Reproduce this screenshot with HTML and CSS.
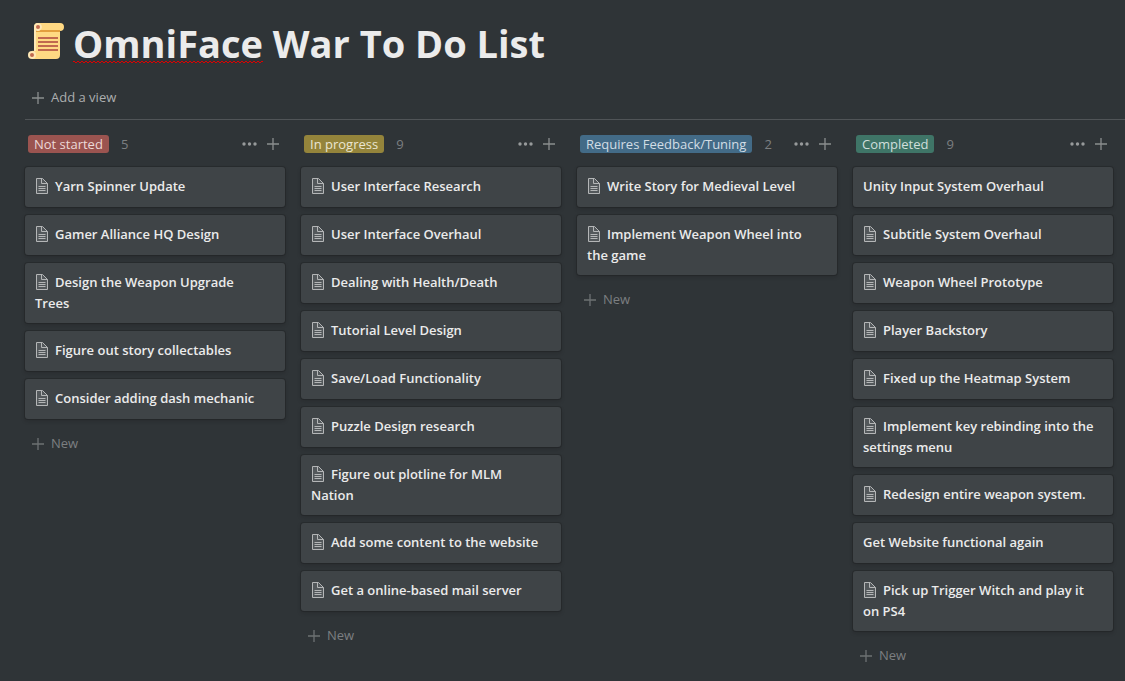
FILE: index.html
```html
<!DOCTYPE html>
<html lang="en">
<head>
<meta charset="utf-8">
<meta name="viewport" content="width=device-width, initial-scale=1">
<title>OmniFace War To Do List</title>
<link rel="stylesheet" href="styles.css">
</head>
<body>
<svg class="sprite" aria-hidden="true">
  <symbol id="page" viewBox="0 0 14 16"><path fill="currentColor" fill-opacity=".18" d="M1.5.5h6l5 5v10h-11z"/><path fill="none" stroke="currentColor" d="M1.5.5h6l5 5v10h-11zM6.5.5v5h6M3.500 8.500h7M3.500 10.500h7M3.500 12.500h7"/></symbol>
  <symbol id="plus" viewBox="0 0 12 12"><path fill="none" stroke="currentColor" stroke-width="1.300" d="M6 0v12M0 6h12"/></symbol>
  <symbol id="dots" viewBox="0 0 15 4"><g fill="currentColor"><circle cx="2" cy="2" r="1.700"/><circle cx="7.500" cy="2" r="1.700"/><circle cx="13" cy="2" r="1.700"/></g></symbol>
</svg>
<header class="header">
  <svg class="scroll" viewBox="0 0 36 36" aria-hidden="true">
    <path fill="#ffd983" d="M32 0H10a4 4 0 0 0-4 4v24a4 4 0 0 0-2 0v8h24a4 4 0 0 0 4-4V8a4 4 0 0 0 0-8z"/>
    <path fill="#e39f3d" d="M8 7h24v2H8z"/>
    <path fill="#ffe8b6" d="M10 0a4 4 0 0 0-4 4v24h2V7.500A4 4 0 1 0 10 0z"/>
    <circle cx="4" cy="32" r="4" fill="#ffe8b6"/>
    <circle cx="10" cy="4" r="2" fill="#c1694f"/><circle cx="4" cy="32" r="2" fill="#c1694f"/>
    <path fill="#c1694f" d="M10 14h20v2H10zM10 18h20v2H10zM10 22h20v2H10zM10 26h20v2H10z"/>
  </svg>
  <h1 class="title"><span class="misspelt">OmniFace</span> War To Do List</h1>
</header>
<nav class="views"><button class="add"><svg class="plus"><use href="#plus"/></svg>Add a view</button></nav>
<main class="board">
  <section class="column">
    <div class="head"><h2 class="tag red">Not started</h2><span class="count">5</span><button class="tool" aria-label="More"><svg class="dots"><use href="#dots"/></svg></button><button class="tool" aria-label="Add card"><svg class="plus"><use href="#plus"/></svg></button></div>
    <a class="card" href="#"><svg class="page"><use href="#page"/></svg>Yarn Spinner Update</a>
    <a class="card" href="#"><svg class="page"><use href="#page"/></svg>Gamer Alliance HQ Design</a>
    <a class="card" href="#"><svg class="page"><use href="#page"/></svg>Design the Weapon Upgrade Trees</a>
    <a class="card" href="#"><svg class="page"><use href="#page"/></svg>Figure out story collectables</a>
    <a class="card" href="#"><svg class="page"><use href="#page"/></svg>Consider adding dash mechanic</a>
    <button class="add new"><svg class="plus"><use href="#plus"/></svg>New</button>
  </section>
  <section class="column">
    <div class="head"><h2 class="tag yellow">In progress</h2><span class="count">9</span><button class="tool" aria-label="More"><svg class="dots"><use href="#dots"/></svg></button><button class="tool" aria-label="Add card"><svg class="plus"><use href="#plus"/></svg></button></div>
    <a class="card" href="#"><svg class="page"><use href="#page"/></svg>User Interface Research</a>
    <a class="card" href="#"><svg class="page"><use href="#page"/></svg>User Interface Overhaul</a>
    <a class="card" href="#"><svg class="page"><use href="#page"/></svg>Dealing with Health/Death</a>
    <a class="card" href="#"><svg class="page"><use href="#page"/></svg>Tutorial Level Design</a>
    <a class="card" href="#"><svg class="page"><use href="#page"/></svg>Save/Load Functionality</a>
    <a class="card" href="#"><svg class="page"><use href="#page"/></svg>Puzzle Design research</a>
    <a class="card" href="#"><svg class="page"><use href="#page"/></svg>Figure out plotline for MLM Nation</a>
    <a class="card" href="#"><svg class="page"><use href="#page"/></svg>Add some content to the website</a>
    <a class="card" href="#"><svg class="page"><use href="#page"/></svg>Get a online-based mail server</a>
    <button class="add new"><svg class="plus"><use href="#plus"/></svg>New</button>
  </section>
  <section class="column">
    <div class="head"><h2 class="tag blue">Requires Feedback/Tuning</h2><span class="count">2</span><button class="tool" aria-label="More"><svg class="dots"><use href="#dots"/></svg></button><button class="tool" aria-label="Add card"><svg class="plus"><use href="#plus"/></svg></button></div>
    <a class="card" href="#"><svg class="page"><use href="#page"/></svg>Write Story for Medieval Level</a>
    <a class="card" href="#"><svg class="page"><use href="#page"/></svg>Implement Weapon Wheel into the game</a>
    <button class="add new"><svg class="plus"><use href="#plus"/></svg>New</button>
  </section>
  <section class="column">
    <div class="head"><h2 class="tag green">Completed</h2><span class="count">9</span><button class="tool" aria-label="More"><svg class="dots"><use href="#dots"/></svg></button><button class="tool" aria-label="Add card"><svg class="plus"><use href="#plus"/></svg></button></div>
    <a class="card" href="#">Unity Input System Overhaul</a>
    <a class="card" href="#"><svg class="page"><use href="#page"/></svg>Subtitle System Overhaul</a>
    <a class="card" href="#"><svg class="page"><use href="#page"/></svg>Weapon Wheel Prototype</a>
    <a class="card" href="#"><svg class="page"><use href="#page"/></svg>Player Backstory</a>
    <a class="card" href="#"><svg class="page"><use href="#page"/></svg>Fixed up the Heatmap System</a>
    <a class="card" href="#"><svg class="page"><use href="#page"/></svg>Implement key rebinding into the settings menu</a>
    <a class="card" href="#"><svg class="page"><use href="#page"/></svg>Redesign entire weapon system.</a>
    <a class="card" href="#">Get Website functional again</a>
    <a class="card" href="#"><svg class="page"><use href="#page"/></svg>Pick up Trigger Witch and play it on PS4</a>
    <button class="add new"><svg class="plus"><use href="#plus"/></svg>New</button>
  </section>
</main>
</body>
</html>
```
FILE: styles.css
```css
* { box-sizing: border-box; }
body {
  margin: 0;
  padding-left: 25px;
  background: #2f3437;
  color: #ebebeb;
  font: 13px/21px "Segoe UI", "Open Sans", "Noto Sans", sans-serif;
}
.sprite { position: absolute; width: 0; height: 0; }
h1, h2 { margin: 0; }
button {
  padding: 0;
  border: 0;
  background: none;
  color: inherit;
  font: inherit;
  cursor: pointer;
}
.header {
  display: flex;
  align-items: center;
  gap: 9px;
  padding: 17px 0 0 3px;
}
.scroll { width: 36px; height: 36px; margin-bottom: 4px; }
.title { font-size: 38px; line-height: 52px; font-weight: 700; }
.misspelt {
  padding-bottom: 1px;
  background:
    repeating-linear-gradient(90deg, #e00000 0 2px, transparent 2px 4px) 0 calc(100% - 8px) / 100% 1px no-repeat,
    repeating-linear-gradient(90deg, transparent 0 2px, #e00000 2px 4px) 0 calc(100% - 7px) / 100% 1px no-repeat;
}
.views {
  padding: 18px 0 11px 7px;
  border-bottom: 1px solid #505457;
  color: #acaeaf;
}
.add { display: flex; align-items: center; gap: 7px; }
.plus { width: 12px; height: 12px; color: #8b8e8f; }
.board {
  display: grid;
  grid-template-columns: repeat(4, 260px);
  gap: 16px;
  align-items: start;
}
.column { display: flex; flex-direction: column; gap: 8px; }
.head {
  display: flex;
  align-items: center;
  height: 39px;
  padding: 9px 6px 0 3px;
}
.tag {
  padding: 0 6px;
  border-radius: 3px;
  font-size: 13px;
  line-height: 18px;
  font-weight: 400;
  white-space: nowrap;
}
.red { background: #9b5450; color: #ecd9d8; }
.yellow { background: #94843b; color: #ebe6d2; }
.blue { background: #436b87; color: #d2dde5; }
.green { background: #3f7567; color: #d0dfdb; }
.count {
  flex: 1;
  padding-left: 12px;
  color: #7c7f81;
  font-weight: 500;
}
.tool { display: flex; color: #979a9b; }
.tool + .tool { margin-left: 10px; }
.dots { width: 15px; height: 4px; }
.card {
  min-height: 40px;
  padding: 9px 15px 9px 10px;
  border-radius: 3px;
  background: #3f4447;
  box-shadow: 0 0 0 1px rgba(15, 15, 15, .2), 0 2px 4px rgba(15, 15, 15, .2);
  color: #ebebeb;
  font-weight: 600;
  text-decoration: none;
}
.page {
  width: 14px;
  height: 16px;
  margin-right: 6px;
  color: #b4b6b7;
  vertical-align: -3px;
}
.new { padding: 6px 7px; color: #7c7f81; }
.new .plus { color: #6d7173; }
```
